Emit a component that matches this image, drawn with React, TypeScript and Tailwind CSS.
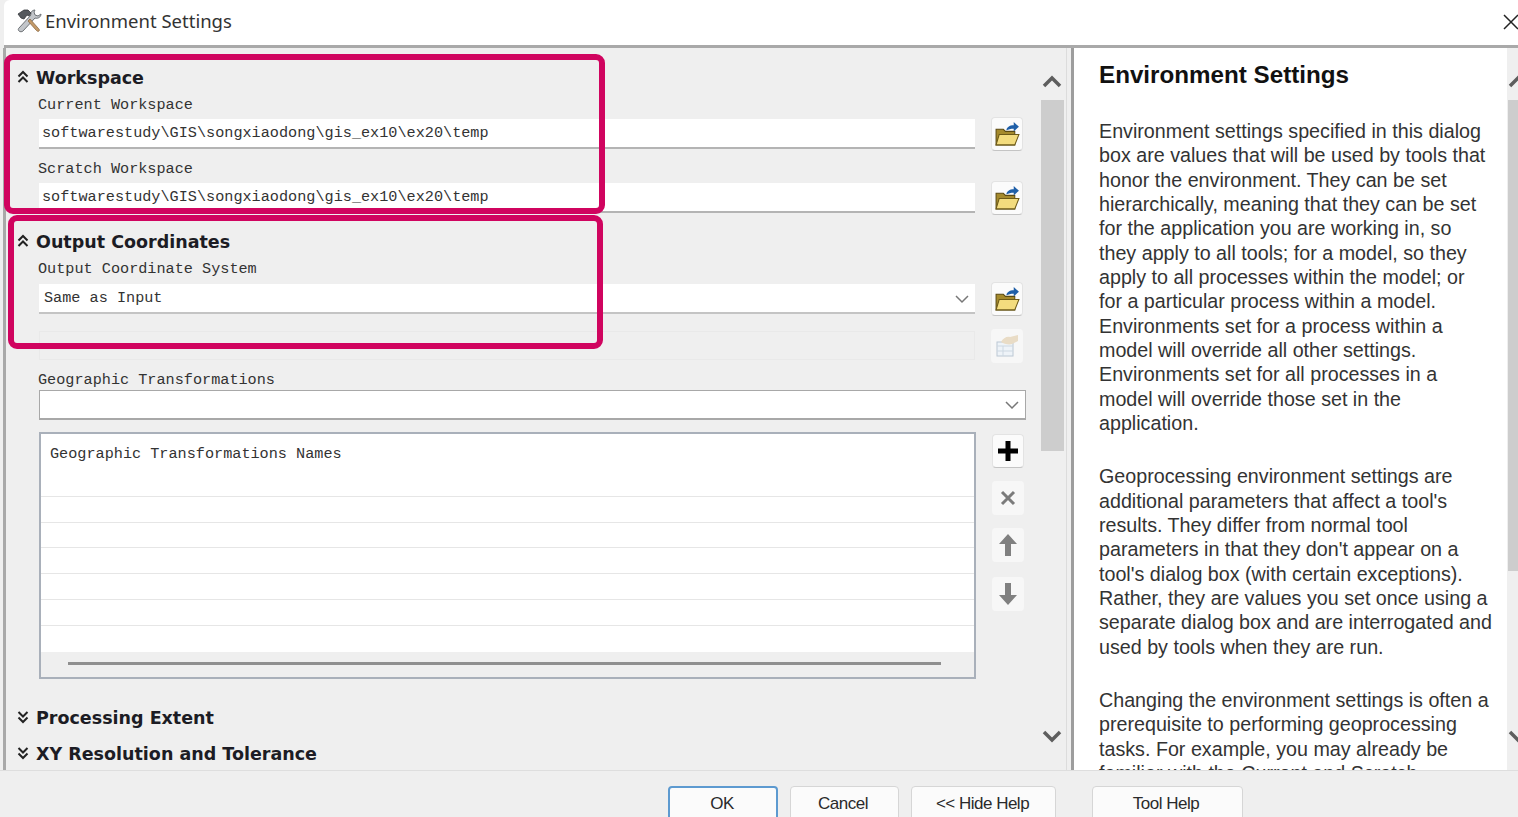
import React from "react";

const mono = "font-['Liberation_Mono',monospace]";

function Folder() {
  return (
    <svg width="27" height="27" viewBox="0 0 26 26">
      <path d="M2 8h7l2 2h9v13H2z" fill="#a58a2c" stroke="#5b4a12" strokeWidth="1" />
      <path d="M2 23l3-10h19l-4 10z" fill="#f3dc7e" stroke="#6d5a18" strokeWidth="1" />
      <path d="M12 9c0-3 3-5 7-5V1l5 4.500-5 4.500V7.500c-3 0-5 .5-7 1.500z" fill="#1f5fa8" />
    </svg>
  );
}

function FolderDisabled() {
  return (
    <svg width="26" height="26" viewBox="0 0 26 26">
      <rect x="3" y="9" width="16" height="14" fill="#eef3f8" stroke="#bcc8d4" />
      <path d="M3 13h16M3 18h16M9 13v10" stroke="#cdd8e2" />
      <path d="M7 9c2-4 6-6 9-5l8-2v6l-6 3c-3 1-8 0-11-2z" fill="#e9dcc6" />
    </svg>
  );
}

function Tools() {
  return (
    <svg width="26" height="26" viewBox="0 0 26 26">
      <path d="M19 2c-3 0-5 3-4 5L3 20c-1 1-1 2 0 3s3 1 4 0L19 10c3 1 6-1 6-4l-3 2-3-1-1-3z" fill="#c3c6ca" stroke="#6f7377" strokeWidth="1" />
      <path d="M12 13l8 9c1 1 2 2 3 1s0-2-1-3l-8-9z" fill="#c49a68" stroke="#8a6a45" strokeWidth="0.8" />
      <path d="M2 6l6-4 4 0 3 3-2 3-2-1-3 4-3-1z" fill="#55595e" stroke="#33363a" strokeWidth="0.8" />
    </svg>
  );
}

function Chevron() {
  return (
    <svg width="16" height="10" viewBox="0 0 16 10" fill="none">
      <path d="M2 2l6 6 6-6" stroke="#777" strokeWidth="1.500" />
    </svg>
  );
}

function Sq({ on, children }: { on?: boolean; children: React.ReactNode }) {
  return (
    <div
      className={
        on
          ? "ml-[16px] flex h-[34px] w-[32px] shrink-0 items-center justify-center rounded-[4px] border border-[#e3e3e3] border-b-[#c4c4c4] bg-[#fbfbfb]"
          : "ml-[16px] flex h-[34px] w-[32px] shrink-0 items-center justify-center rounded-[4px] bg-[#f7f7f7]"
      }
    >
      {children}
    </div>
  );
}

function Header({ title, open, className }: { title: string; open?: boolean; className: string }) {
  return (
    <div className={`flex h-[20px] items-center pl-[10px] ${className}`}>
      <svg width="14" height="14" viewBox="0 0 14 14" fill="none" className="mr-[6px] -mt-[2px] shrink-0">
        {open ? (
          <path d="M2.500 6.500L7 2l4.500 4.500M2.500 12L7 7.500l4.500 4.500" stroke="#222" strokeWidth="2" />
        ) : (
          <path d="M2.500 2L7 6.500 11.500 2M2.500 7.500L7 12l4.500-4.500" stroke="#222" strokeWidth="2" />
        )}
      </svg>
      <span className="whitespace-nowrap font-['DejaVu_Sans',sans-serif] text-[17.500px] font-bold leading-[20px] text-[#1c1c24]">
        {title}
      </span>
    </div>
  );
}

function Label({ text, className }: { text: string; className: string }) {
  return (
    <div className={`h-[20px] whitespace-nowrap pl-[32px] ${mono} text-[15.200px] leading-[20px] text-[#333] ${className}`}>
      {text}
    </div>
  );
}

const PATH = "softwarestudy\\GIS\\songxiaodong\\gis_ex10\\ex20\\temp";

const para1 = [
  "Environment settings specified in this dialog",
  "box are values that will be used by tools that",
  "honor the environment. They can be set",
  "hierarchically, meaning that they can be set",
  "for the application you are working in, so",
  "they apply to all tools; for a model, so they",
  "apply to all processes within the model; or",
  "for a particular process within a model.",
  "Environments set for a process within a",
  "model will override all other settings.",
  "Environments set for all processes in a",
  "model will override those set in the",
  "application.",
];
const para2 = [
  "Geoprocessing environment settings are",
  "additional parameters that affect a tool's",
  "results. They differ from normal tool",
  "parameters in that they don't appear on a",
  "tool's dialog box (with certain exceptions).",
  "Rather, they are values you set once using a",
  "separate dialog box and are interrogated and",
  "used by tools when they are run.",
];
const para3 = [
  "Changing the environment settings is often a",
  "prerequisite to performing geoprocessing",
  "tasks. For example, you may already be",
  "familiar with the Current and Scratch",
];

function Para({ lines, className }: { lines: string[]; className: string }) {
  return (
    <div className={className}>
      {lines.map((l) => (
        <div key={l} className="h-[24.330px] whitespace-nowrap">
          {l}
        </div>
      ))}
    </div>
  );
}

function Btn({ text, className }: { text: string; className: string }) {
  return (
    <div
      className={`flex h-[36px] items-start justify-center rounded-t-[4px] bg-[#fbfbfb] font-['Liberation_Sans',sans-serif] text-[17px] leading-[22px] tracking-[-0.500px] text-[#2a2a2a] ${className}`}
    >
      {text}
    </div>
  );
}

export default function App() {
  return (
    <div className="relative flex h-[817px] w-[1518px] flex-col overflow-hidden bg-[#efefef]">
      <div className="ml-[4px] flex h-[48px] shrink-0 items-start rounded-tl-[6px] border-b-[3px] border-[#a9a9a9] bg-white pl-[16px] pt-[8px]">
        <div className="-ml-[4px] mr-[3px]"><Tools /></div>
        <span className="font-['Noto_Sans',sans-serif] text-[18.500px] leading-[26px] text-[#333]">Environment Settings</span>
        <svg width="16" height="16" viewBox="0 0 16 16" className="ml-auto -mr-[1px] mt-[6px] shrink-0" fill="none">
          <path d="M1 1l14 14M15 1L1 15" stroke="#222" strokeWidth="1.500" />
        </svg>
      </div>

      <div className="flex h-[723px] shrink-0 border-b border-[#dedede]">
        <div className="ml-[3px] flex w-[1064px] shrink-0 border-l-[3px] border-r border-l-[#a9a9a9] border-r-[#dcdcdc]">
          <div className="w-[1033px] shrink-0">
            <Header title="Workspace" open className="mt-[20px]" />
            <Label text="Current Workspace" className="mt-[7px]" />
            <div className="mt-[4px] flex h-[30px] items-center pl-[33px]">
              <div className={`flex h-[30px] w-[936px] shrink-0 items-center border-b-2 border-[#b4b4b4] bg-white pl-[3px] ${mono} text-[15.200px] text-[#333]`}>{PATH}</div>
              <Sq on><Folder /></Sq>
            </div>
            <Label text="Scratch Workspace" className="mt-[10px]" />
            <div className="mt-[4px] flex h-[30px] items-center pl-[33px]">
              <div className={`flex h-[30px] w-[936px] shrink-0 items-center border-b-2 border-[#b4b4b4] bg-white pl-[3px] ${mono} text-[15.200px] text-[#333]`}>{PATH}</div>
              <Sq on><Folder /></Sq>
            </div>
            <Header title="Output Coordinates" open className="mt-[19px]" />
            <Label text="Output Coordinate System" className="mt-[7px]" />
            <div className="mt-[5px] flex h-[30px] items-center pl-[33px]">
              <div className={`flex h-[30px] w-[936px] shrink-0 items-center justify-between border-b-2 border-[#c4c4c4] bg-white pl-[5px] pr-[5px] pt-[1px] ${mono} text-[15.200px] text-[#333]`}>
                Same as Input
                <Chevron />
              </div>
              <Sq on><Folder /></Sq>
            </div>
            <div className="mt-[17px] flex h-[29px] items-center pl-[33px]">
              <div className="h-[29px] w-[936px] shrink-0 border border-[#e9e9e9] bg-[#efefef]" />
              <Sq><FolderDisabled /></Sq>
            </div>
            <Label text="Geographic Transformations" className="mt-[10px]" />
            <div className="ml-[33px] flex h-[30px] w-[987px] items-center justify-end border border-b-2 border-[#a8a8a8] bg-white pr-[5px]">
              <Chevron />
            </div>
            <div className="mt-[12px] flex items-start pl-[33px]">
              <div className="flex h-[247px] w-[937px] shrink-0 flex-col border-2 border-[#a9b0ba] bg-white">
                <div className={`h-[63px] shrink-0 border-b border-[#e6e6e6] pl-[9px] pt-[10px] ${mono} text-[15.200px] leading-[20px] text-[#333]`}>
                  Geographic Transformations Names
                </div>
                <div className="h-[26px] shrink-0 border-b border-[#e6e6e6]" />
                <div className="h-[25px] shrink-0 border-b border-[#e6e6e6]" />
                <div className="h-[26px] shrink-0 border-b border-[#e6e6e6]" />
                <div className="h-[26px] shrink-0 border-b border-[#e6e6e6]" />
                <div className="h-[26px] shrink-0 border-b border-[#e6e6e6]" />
                <div className="h-[26px] shrink-0" />
                <div className="flex flex-1 items-center bg-[#efefef] pb-[3px] pl-[27px]">
                  <div className="h-[3px] w-[873px] bg-[#8f8f8f]" />
                </div>
              </div>
              <div className="flex flex-col">
                <div className="mt-[2px]"><Sq on>
                  <svg width="24" height="24" viewBox="0 0 24 24"><path d="M9.500 2h5v7.500H22v5h-7.500V22h-5v-7.500H2v-5h7.500z" fill="#000" /></svg>
                </Sq></div>
                <div className="mt-[13px]"><Sq>
                  <svg width="18" height="18" viewBox="0 0 18 18" fill="none"><path d="M3 3l12 12M15 3L3 15" stroke="#7b7b7b" strokeWidth="3" /></svg>
                </Sq></div>
                <div className="mt-[13px]"><Sq>
                  <svg width="22" height="24" viewBox="0 0 22 24"><path d="M11 1l9 10h-6v12H8V11H2z" fill="#808080" /></svg>
                </Sq></div>
                <div className="mt-[15px]"><Sq>
                  <svg width="22" height="24" viewBox="0 0 22 24"><path d="M11 23l9-10h-6V1H8v12H2z" fill="#808080" /></svg>
                </Sq></div>
              </div>
            </div>
            <Header title="Processing Extent" className="mt-[29px]" />
            <Header title="XY Resolution and Tolerance" className="mt-[16px]" />
          </div>
          <div className="flex w-[26px] shrink-0 flex-col items-center">
            <svg width="20" height="14" viewBox="0 0 20 14" fill="none" className="mt-[26px]">
              <path d="M2 12l8-8 8 8" stroke="#5e5e5e" strokeWidth="3.500" />
            </svg>
            <div className="mt-[12px] h-[351px] w-[23px] bg-[#cdcdcd]" />
            <svg width="20" height="14" viewBox="0 0 20 14" fill="none" className="mt-[279px]">
              <path d="M2 2l8 8 8-8" stroke="#5e5e5e" strokeWidth="3.500" />
            </svg>
          </div>
        </div>
        <div className="ml-[4px] flex flex-1 overflow-hidden border-l-[3px] border-[#9d9d9d] bg-white">
          <div className="w-[433px] shrink-0 overflow-hidden pl-[25px] font-['Liberation_Sans',sans-serif] text-[19.700px] text-[#333]">
            <div className="mt-[12px] h-[30px] whitespace-nowrap text-[24.200px] font-bold leading-[30px] text-[#111]">Environment Settings</div>
            <Para lines={para1} className="mt-[27px]" />
            <Para lines={para2} className="mt-[29px]" />
            <Para lines={para3} className="mt-[29px]" />
          </div>
          <div className="flex flex-1 flex-col overflow-hidden bg-[#efefef] pl-[1px]">
            <svg width="20" height="14" viewBox="0 0 20 14" fill="none" className="mt-[26px] shrink-0">
              <path d="M2 12l8-8 8 8" stroke="#5e5e5e" strokeWidth="3.500" />
            </svg>
            <div className="mt-[12px] h-[471px] w-[10px] shrink-0 bg-[#cdcdcd]" />
            <svg width="20" height="14" viewBox="0 0 20 14" fill="none" className="mt-[159px] shrink-0">
              <path d="M2 2l8 8 8-8" stroke="#5e5e5e" strokeWidth="3.500" />
            </svg>
          </div>
        </div>
      </div>

      <div className="flex pl-[668px] pt-[15px]">
        <Btn text="OK" className="w-[110px] border-2 border-[#5d9ad0] pt-[5px] pr-[2px]" />
        <Btn text="Cancel" className="ml-[12px] w-[109px] border border-[#d6d6d6] pt-[6px] pr-[3px]" />
        <Btn text="<< Hide Help" className="ml-[12px] w-[145px] border border-[#d6d6d6] pt-[6px] pr-[2px]" />
        <Btn text="Tool Help" className="ml-[36px] w-[151px] border border-[#d6d6d6] pt-[6px] pr-[3px]" />
      </div>

      <div className="absolute left-[4px] top-[54px] h-[160px] w-[601px] rounded-[9px] border-[6px] border-[#d0045f]" />
      <div className="absolute left-[8px] top-[215px] h-[134px] w-[595px] rounded-[9px] border-[6px] border-[#d0045f]" />
    </div>
  );
}
